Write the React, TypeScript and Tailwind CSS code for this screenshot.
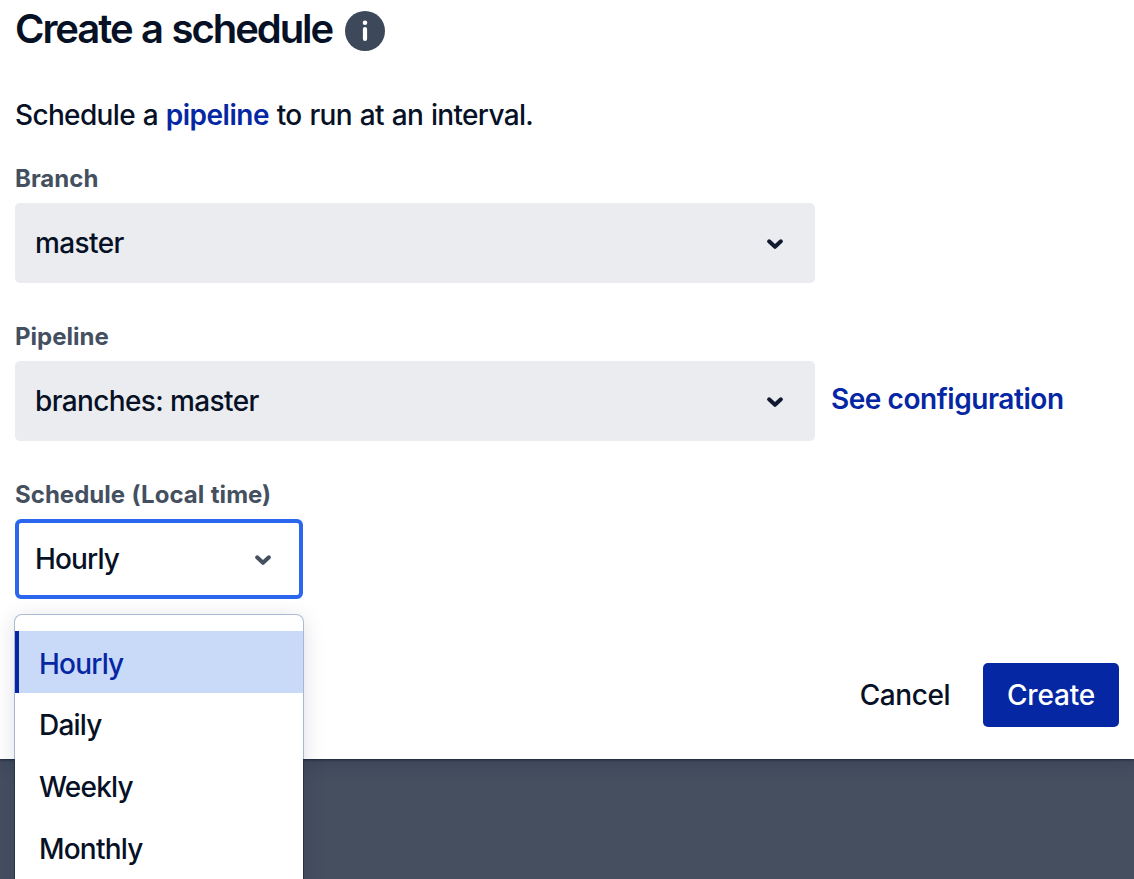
import React from "react";

function Chevron({ color }: { color: string }) {
  return (
    <svg className="mt-[2px]" width="20" height="14" viewBox="0 0 20 14" fill="none" stroke={color} strokeWidth="4" strokeLinecap="round" strokeLinejoin="round">
      <path d="M4.1 4.3 10 9.8l5.9-5.5" />
    </svg>
  );
}

function Label({ children }: { children: React.ReactNode }) {
  return (
    <div className="h-[40px] pt-[1px] text-[24px] leading-[30px] font-bold tracking-[0.02px] [word-spacing:0.8px] text-[#44505f]">{children}</div>
  );
}

function Field({ label, value }: { label: string; value: string }) {
  return (
    <div className="h-[158px] w-[800px]">
      <Label>{label}</Label>
      <div className="flex h-[80px] items-center justify-between rounded-[5px] bg-[#ebecf0] pr-[30px] pl-[20px]">
        <span>{value}</span>
        <Chevron color="#111a30" />
      </div>
    </div>
  );
}

export default function App() {
  const options = ["Hourly", "Daily", "Weekly", "Monthly"];
  return (
    <div className="relative flex h-[879px] w-[1134px] flex-col overflow-hidden bg-[#454f60] font-['Inter',sans-serif] text-[28px] font-[450] tracking-[-0.62px] text-[#071126]">
      <main className="flex h-[759px] flex-col bg-white pl-[15px] shadow-[0_1px_2px_rgba(7,17,38,0.6),0_2px_20px_rgba(7,17,38,0.2)]">
        <header className="flex h-[60px] items-center gap-[13px]">
          <h1 className="-mt-[2px] text-[40px] leading-[60px] font-semibold tracking-[-2.05px] [word-spacing:1.5px]">Create a schedule</h1>
          <svg className="mt-[2px]" width="40" height="40" viewBox="0 0 40 40">
            <circle cx="20" cy="20" r="20" fill="#3d485b" />
            <circle cx="20" cy="11.8" r="2.3" fill="white" />
            <path d="M20 18v10" stroke="white" strokeWidth="4.2" strokeLinecap="round" />
          </svg>
        </header>
        <p className="mt-[35px] h-[40px] leading-[40px] tracking-[-0.66px] [word-spacing:1px]">
          Schedule a <span className="font-semibold tracking-[-0.5px] text-[#0527a3]">pipeline</span> to run at an interval.
        </p>
        <div className="mt-[28px]">
          <Field label="Branch" value="master" />
        </div>
        <div className="flex">
          <Field label="Pipeline" value="branches: master" />
          <a className="ml-[16px] pt-[58px] leading-[40px] font-semibold tracking-[-0.45px] text-[#0527a3]">See configuration</a>
        </div>
        <Label>Schedule (Local time)</Label>
        <div className="flex h-[80px] w-[288px] items-center justify-between rounded-[6px] border-4 border-[#2b67ee] pr-[26px] pl-[16px]">
          <span className="tracking-[-0.85px]">Hourly</span>
          <Chevron color="#44505f" />
        </div>
        <div className="mt-[64px] mr-[15px] flex items-center justify-end gap-[33px] tracking-[-0.45px]">
          <button className="font-medium">Cancel</button>
          <button className="h-[64px] w-[136px] rounded-[5px] bg-[#0527a3] font-medium tracking-[-0.2px] text-white">Create</button>
        </div>
      </main>
      <div className="absolute top-[615px] left-[15px] h-[300px] w-[288px] rounded-[7px] bg-white pt-[16px] tracking-[-0.8px] shadow-[0_4px_22px_rgba(9,30,66,0.15),0_0_0_1px_rgba(120,145,195,0.55)]">
        {options.map((o, i) => (
          <div key={o} className={i === 0 ? "flex h-[62px] items-center border-l-4 border-[#0527a3] bg-[#c9daf8] pt-[3px] pl-[20px] text-[#0527a3]" : "flex h-[62px] items-center pt-[2px] pl-[24px]"}>{o}</div>
        ))}
        <div className="absolute top-[144px] -left-px h-[156px] w-px bg-[#273246]" />
        <div className="absolute top-[144px] -right-px h-[156px] w-px bg-[#273246]" />
      </div>
    </div>
  );
}
